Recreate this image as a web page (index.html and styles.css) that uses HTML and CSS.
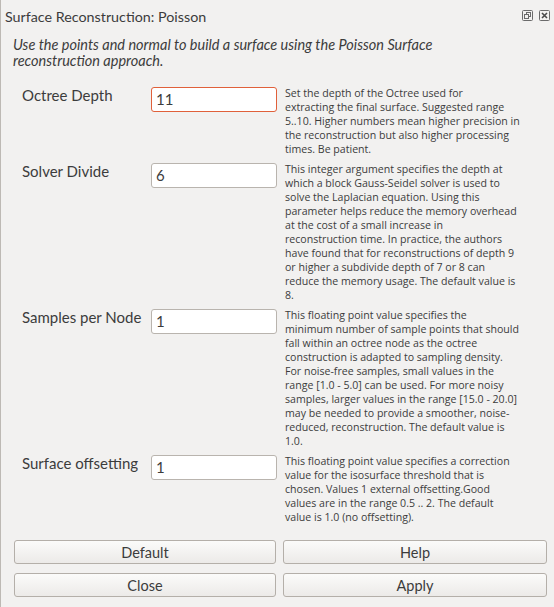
FILE: index.html
```html
<!DOCTYPE html>
<html>
<head>
<meta charset="utf-8">
<link rel="stylesheet" href="styles.css">
</head>
<body>
<div class="window">
  <div class="titlebar">
    <span class="title">Surface Reconstruction: Poisson</span>
    <div class="tb-icons">
      <svg class="tb-icon" width="11" height="11" viewBox="0 0 11 11">
        <rect x="0.5" y="0.5" width="10" height="10" rx="1" fill="none" stroke="#6b6b6b"/>
        <rect x="4.5" y="2.5" width="4" height="4" fill="none" stroke="#6b6b6b"/>
        <rect x="2.5" y="4.5" width="4" height="4" fill="#f2f1f0" stroke="#6b6b6b"/>
      </svg>
      <svg class="tb-icon" width="11" height="11" viewBox="0 0 11 11">
        <rect x="0.5" y="0.5" width="10" height="10" rx="1" fill="none" stroke="#6b6b6b"/>
        <path d="M3 3 L8 8 M8 3 L3 8" stroke="#4a4a4a" stroke-width="1.6"/>
      </svg>
    </div>
  </div>
  <p class="intro">Use the points and normal to build a surface using the Poisson Surface<br>reconstruction approach.</p>
  <div class="form">
    <label class="lbl">Octree Depth</label>
    <div class="field focus">11</div>
    <p class="help">Set the depth of the Octree used for<br>extracting the final surface. Suggested range<br>5..10. Higher numbers mean higher precision in<br>the reconstruction but also higher processing<br>times. Be patient.</p>

    <label class="lbl">Solver Divide</label>
    <div class="field">6</div>
    <p class="help">This integer argument specifies the depth at<br>which a block Gauss-Seidel solver is used to<br>solve the Laplacian equation. Using this<br>parameter helps reduce the memory overhead<br>at the cost of a small increase in<br>reconstruction time. In practice, the authors<br>have found that for reconstructions of depth 9<br>or higher a subdivide depth of 7 or 8 can<br>reduce the memory usage. The default value is<br>8.</p>

    <label class="lbl">Samples per Node</label>
    <div class="field">1</div>
    <p class="help">This floating point value specifies the<br>minimum number of sample points that should<br>fall within an octree node as the octree<br>construction is adapted to sampling density.<br>For noise-free samples, small values in the<br>range [1.0 - 5.0] can be used. For more noisy<br>samples, larger values in the range [15.0 - 20.0]<br>may be needed to provide a smoother, noise-<br>reduced, reconstruction. The default value is<br>1.0.</p>

    <label class="lbl">Surface offsetting</label>
    <div class="field">1</div>
    <p class="help">This floating point value specifies a correction<br>value for the isosurface threshold that is<br>chosen. Values 1 external offsetting.Good<br>values are in the range 0.5 .. 2. The default<br>value is 1.0 (no offsetting).</p>
  </div>
  <div class="buttons">
    <button class="btn">Default</button>
    <button class="btn">Help</button>
    <button class="btn">Close</button>
    <button class="btn">Apply</button>
  </div>
</div>
</body>
</html>
```

FILE: styles.css
```css
html, body {
  margin: 0;
  padding: 0;
  background: #f2f1f0;
}
body {
  font-family: "Lato", "Open Sans", sans-serif;
  color: #3c3c3c;
}
.window {
  width: 554px;
  height: 607px;
  box-sizing: border-box;
  border-left: 1px solid #bdb9b4;
  background: #f2f1f0;
}
.titlebar {
  height: 31px;
  display: flex;
  align-items: center;
  justify-content: space-between;
  padding: 0 4px 0 4px;
  box-sizing: border-box;
}
.title {
  font-size: 14.3px;
  color: #3c3c3c;
  padding-top: 1px;
}
.tb-icons {
  display: flex;
  gap: 6px;
}
.tb-icon {
  display: block;
}
.intro {
  margin: 6px 0 0 12px;
  font-style: italic;
  font-size: 14.5px;
  line-height: 16px;
  color: #3c3c3c;
}
.form {
  display: grid;
  grid-template-columns: 129px 126px 1fr;
  row-gap: 6px;
  margin: 17px 0 0 21px;
  align-items: start;
}
.lbl {
  font-size: 15px;
  line-height: 18px;
  white-space: nowrap;
}
.field {
  height: 25px;
  box-sizing: border-box;
  border: 1px solid #b9b4ae;
  border-radius: 3px;
  background: #ffffff;
  font-size: 15px;
  line-height: 23px;
  padding: 0 4px;
  margin-top: 1px;
  color: #3c3c3c;
}
.field.focus {
  border-color: #e0603a;
}
.help {
  margin: 0 0 0 8px;
  font-family: "Open Sans", sans-serif;
  font-size: 10.6px;
  line-height: 14px;
  white-space: nowrap;
  color: #3c3c3c;
}
.buttons {
  display: grid;
  grid-template-columns: 262px 264px;
  column-gap: 7px;
  row-gap: 9px;
  margin: 16px 0 0 13px;
}
.btn {
  height: 24px;
  border: 1px solid #b4afa9;
  border-radius: 3px;
  background: linear-gradient(#fbfbfa, #eceae8);
  font-family: "Lato", "Open Sans", sans-serif;
  font-size: 14.5px;
  color: #3c3c3c;
  padding: 0;
}
```
